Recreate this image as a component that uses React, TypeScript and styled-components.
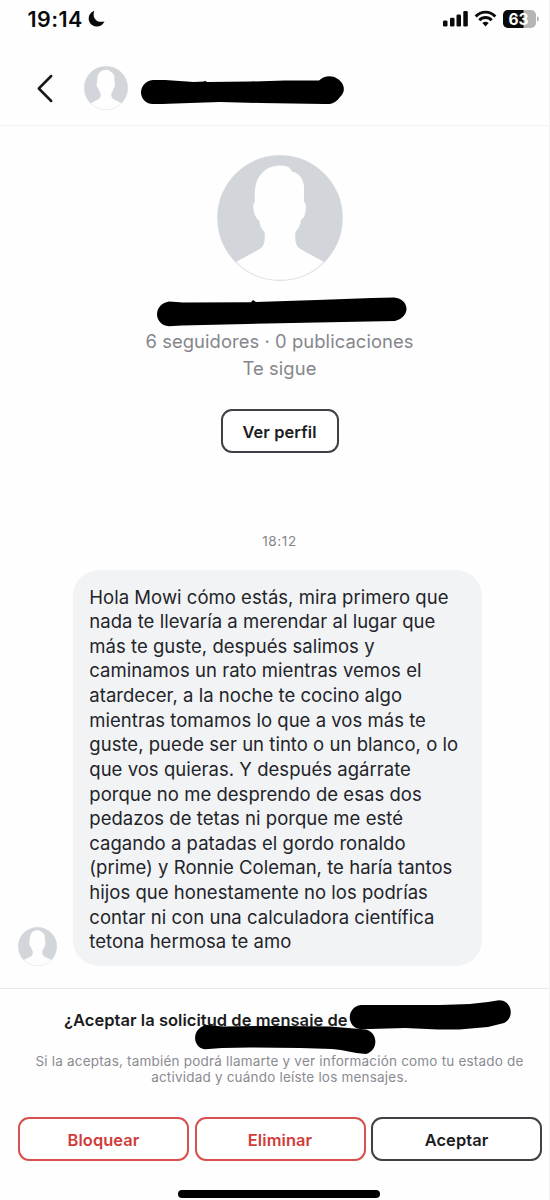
import React from "react";
import styled, { createGlobalStyle } from "styled-components";

const Global = createGlobalStyle`
  * { box-sizing: border-box; }
  body { margin: 0; background: #fefefe; font-family: Inter, "Liberation Sans", sans-serif; color: #1b1c21; }
`;

const Screen = styled.div`
  width: 550px;
  height: 1200px;
  display: flex;
  flex-direction: column;
  border-right: 1px solid #f3f3f4;
  background: #fefefe;
  overflow: hidden;
`;

const StatusBar = styled.div`
  height: 37px;
  flex: none;
  display: flex;
  align-items: center;
  padding: 0 9px 0 27.5px;
`;

const Clock = styled.span`
  font-size: 21.5px;
  font-weight: 600;
  letter-spacing: 0.4px;
  color: #0a0a0a;
  margin-right: 5px;
`;

const StatusIcons = styled.div`
  margin-left: auto;
  display: flex;
  align-items: center;
`;

const Header = styled.header`
  height: 75px;
  margin-top: 14px;
  flex: none;
  display: flex;
  align-items: center;
  padding-left: 36px;
  border-bottom: 1px solid #f4f4f5;
`;

const Back = styled.button`
  display: flex;
  border: 0;
  padding: 0;
  background: none;
  margin-right: 30px;
`;

const HeaderName = styled.div`
  display: flex;
  margin-left: 12px;
`;

const Profile = styled.section`
  display: flex;
  flex-direction: column;
  align-items: center;
  padding: 29px 0 0 10px;
`;

const NameStroke = styled.div`
  display: flex;
  margin: 14px 0 1px 4px;
`;

const Stat = styled.div`
  font-size: 18.4px;
  line-height: 27px;
  letter-spacing: 0.07px;
  color: #85868c;
  white-space: nowrap;
`;

const Button = styled.button<{ $danger?: boolean; $width: number }>`
  width: ${(p) => p.$width}px;
  height: 44px;
  padding: 1px 0 0;
  border: 2px solid ${(p) => (p.$danger ? "#d65150" : "#404146")};
  border-radius: 11px;
  background: #fff;
  font-family: inherit;
  font-size: 16.4px;
  font-weight: 600;
  letter-spacing: 0.1px;
  color: ${(p) => (p.$danger ? "#cf3c3a" : "#1b1c21")};
`;

const ProfileButton = styled(Button)`
  margin-top: 27px;
`;

const Time = styled.div`
  margin-top: 80px;
  font-size: 13.5px;
  line-height: 17px;
  letter-spacing: 0.6px;
  color: #85868c;
`;

const MessageRow = styled.div`
  display: flex;
  align-items: flex-end;
  gap: 16px;
  padding-left: 18px;
  margin-top: 20px;
`;

const Bubble = styled.div`
  width: 408.5px;
  height: 396px;
  padding: 14.5px 0 0 16.3px;
  border-radius: 26px;
  background: #f2f3f5;
`;

const Line = styled.div`
  font-size: 18.5px;
  line-height: 24.62px;
  letter-spacing: 0.03px;
  white-space: nowrap;
  color: #232429;
`;

const Footer = styled.footer`
  position: relative;
  margin-top: 22px;
  height: 212px;
  flex: none;
  display: flex;
  flex-direction: column;
  border-top: 1px solid #e9e9eb;
`;

const Title = styled.div`
  margin: 20px 0 0 64px;
  font-size: 16.5px;
  line-height: 22px;
  font-weight: 600;
  letter-spacing: 0.04px;
  white-space: nowrap;
`;

const Hint = styled.p`
  margin: 22px 0 0 10px;
  text-align: center;
  font-size: 13.5px;
  line-height: 16px;
  letter-spacing: 0.2px;
  color: #8a8b92;
`;

const Actions = styled.div`
  display: flex;
  gap: 5.5px;
  margin-top: 32px;
  padding-left: 18px;
`;

const HomeIndicator = styled.div`
  width: 202px;
  height: 7.5px;
  margin: 29px 0 0 178px;
  border-radius: 4px;
  background: #000;
`;

const Scribble = styled.svg`
  position: absolute;
  left: 190px;
  top: 6px;
`;

function Avatar({ size }: { size: number }) {
  return (
    <svg width={size} height={size} viewBox="0 0 126 126" style={{ flex: "none" }}>
      <defs>
        <clipPath id={`disc${size}`}>
          <circle cx="63" cy="63" r="62.5" />
        </clipPath>
      </defs>
      <g clipPath={`url(#disc${size})`}>
        <rect width="126" height="126" fill="#d2d5da" />
        <path
          fill="#fefefe"
          d="M38 47 C37 32 39 24 46 17 C53 10 66 9 72 12.5 C74 14 74 16 76 17 C82 18 86 24 87 31 L87 47 C90 48 89 57 87 62 C86 64 85 63 84 65 C83 71 81 74 78.500 77 C78 82 78 85 79 88 C80 92 82 93 85 95 L107 107 L107 126 L19 126 L19 107 L41 95 C44 93 46 92 47 88 C48 85 48 82 47.500 77 C44 74 43 70 42 65 C40 64 40 64 39 62 C36 57 35 48 38 47 Z"
        />
      </g>
      <circle cx="63" cy="63" r="62.300" fill="none" stroke="#d2d5da" strokeOpacity="0.6" strokeWidth="1.200" />
    </svg>
  );
}

const message = [
  "Hola Mowi cómo estás, mira primero que",
  "nada te llevaría a merendar al lugar que",
  "más te guste, después salimos y",
  "caminamos un rato mientras vemos el",
  "atardecer, a la noche te cocino algo",
  "mientras tomamos lo que a vos más te",
  "guste, puede ser un tinto o un blanco, o lo",
  "que vos quieras. Y después agárrate",
  "porque no me desprendo de esas dos",
  "pedazos de tetas ni porque me esté",
  "cagando a patadas el gordo ronaldo",
  "(prime) y Ronnie Coleman, te haría tantos",
  "hijos que honestamente no los podrías",
  "contar ni con una calculadora científica",
  "tetona hermosa te amo",
];

export default function App() {
  return (
    <Screen>
      <Global />
      <StatusBar>
        <Clock>19:14</Clock>
        <svg width="17.500" height="17.500" viewBox="0 0 18 18">
          <path d="M6.500 1 C4 7 8 14 17 11.800 C15 16 11.500 17.300 8.500 17 C3.500 16.500 0.500 12.500 0.700 8.500 C0.900 4.500 3.500 1.700 6.500 1 Z" fill="#0a0a0a" />
        </svg>
        <StatusIcons>
          <svg width="98" height="20" viewBox="0 0 98 20">
            <g fill="#0a0a0a">
              <rect x="1" y="11.500" width="4.500" height="6" rx="1.300" />
              <rect x="8" y="8.800" width="4.500" height="8.700" rx="1.300" />
              <rect x="14.500" y="5.500" width="4.500" height="12" rx="1.300" />
              <rect x="21.300" y="2" width="4.500" height="15.500" rx="1.300" />
            </g>
            <g fill="none" stroke="#0a0a0a" strokeWidth="2.900">
              <path d="M33.700 7.400 C39 1.700 48 1.700 53.300 7.400" />
              <path d="M37.300 11.300 C40.800 7.600 46.200 7.600 49.700 11.300" />
            </g>
            <path d="M40.400 14 C42.200 12.300 44.800 12.300 46.600 14 L43.500 17.400 Z" fill="#0a0a0a" />
            <clipPath id="battery">
              <rect x="61" y="1" width="33" height="18" rx="5" />
            </clipPath>
            <g clipPath="url(#battery)">
              <rect x="61" y="1" width="33" height="18" fill="#b5b5b6" />
              <rect x="61" y="1" width="20.500" height="18" fill="#0a0a0a" />
            </g>
            <path d="M95 7.300 C97.700 8 97.700 12 95 12.700 Z" fill="#b5b5b6" />
            <text x="76.500" y="15.600" textAnchor="middle" fontSize="15.500" fontWeight="700" fontFamily="Inter, sans-serif" fill="#fff">63</text>
          </svg>
        </StatusIcons>
      </StatusBar>
      <Header>
        <Back aria-label="Atrás">
          <svg width="18" height="30" viewBox="0 0 18 30">
            <path d="M15.200 3 L2.800 15.500 L15.200 28" fill="none" stroke="#17181c" strokeWidth="2.500" strokeLinecap="round" strokeLinejoin="round" />
          </svg>
        </Back>
        <Avatar size={44} />
        <HeaderName>
          <svg width="206" height="32" viewBox="0 0 206 32">
            <path d="M13 8 H25 L54 10 L64 9.500 L65 8.800 L67 10 L110 9.500 L145 8.500 H179 C184 3.500 192 3 197 6.500 C205 11 206 20 200 25 C196 31 190 33 184 32 L120 31 L80 30 L50 31 L22 32 H13 C-3 31 -3 10 13 8 Z" />
          </svg>
        </HeaderName>
      </Header>
      <Profile>
        <Avatar size={126} />
        <NameStroke>
          <svg width="250" height="32" viewBox="0 0 250 32">
            <path d="M12 6.500 L26 7.500 L94 7.200 L96 5 L99 7 L160 5 L215 3 L237 2.500 C253 4 254 22 238 26 L160 27.500 L90 29 L25 30.500 L12 31.300 C-4 29.500 -4 9 12 6.500 Z" />
          </svg>
        </NameStroke>
        <Stat>6 seguidores · 0 publicaciones</Stat>
        <Stat>Te sigue</Stat>
        <ProfileButton $width={118}>Ver perfil</ProfileButton>
        <Time>18:12</Time>
      </Profile>
      <MessageRow>
        <Avatar size={39} />
        <Bubble>
          {message.map((text) => (
            <Line key={text}>{text}</Line>
          ))}
        </Bubble>
      </MessageRow>
      <Footer>
        <Title>¿Aceptar la solicitud de mensaje de</Title>
        <Hint>
          Si la aceptas, también podrá llamarte y ver información como tu estado de
          <br />
          actividad y cuándo leíste los mensajes.
        </Hint>
        <Actions>
          <Button $danger $width={171}>Bloquear</Button>
          <Button $danger $width={171}>Eliminar</Button>
          <Button $width={171}>Aceptar</Button>
        </Actions>
        <HomeIndicator />
        <Scribble width="325" height="65" viewBox="190 995 325 65">
          <path d="M361 1005 H440 L470 1004 L488 1002 L499 1000.200 C512 1000 515 1018 504 1023 L488 1027 L459 1029.500 H438 L405 1028 L370 1029 L361 1029 C346 1028 346 1007 361 1005 Z" />
          <path d="M207 1025 L223 1026.500 L255 1026 L285 1026 L330 1026.500 L366 1029.500 C379 1033 378 1051 366 1054 C352 1053 345 1050 332 1049 L300 1048 L250 1047.500 L222 1048 L205 1049.300 C191 1047 192 1027 207 1025 Z" />
        </Scribble>
      </Footer>
    </Screen>
  );
}
